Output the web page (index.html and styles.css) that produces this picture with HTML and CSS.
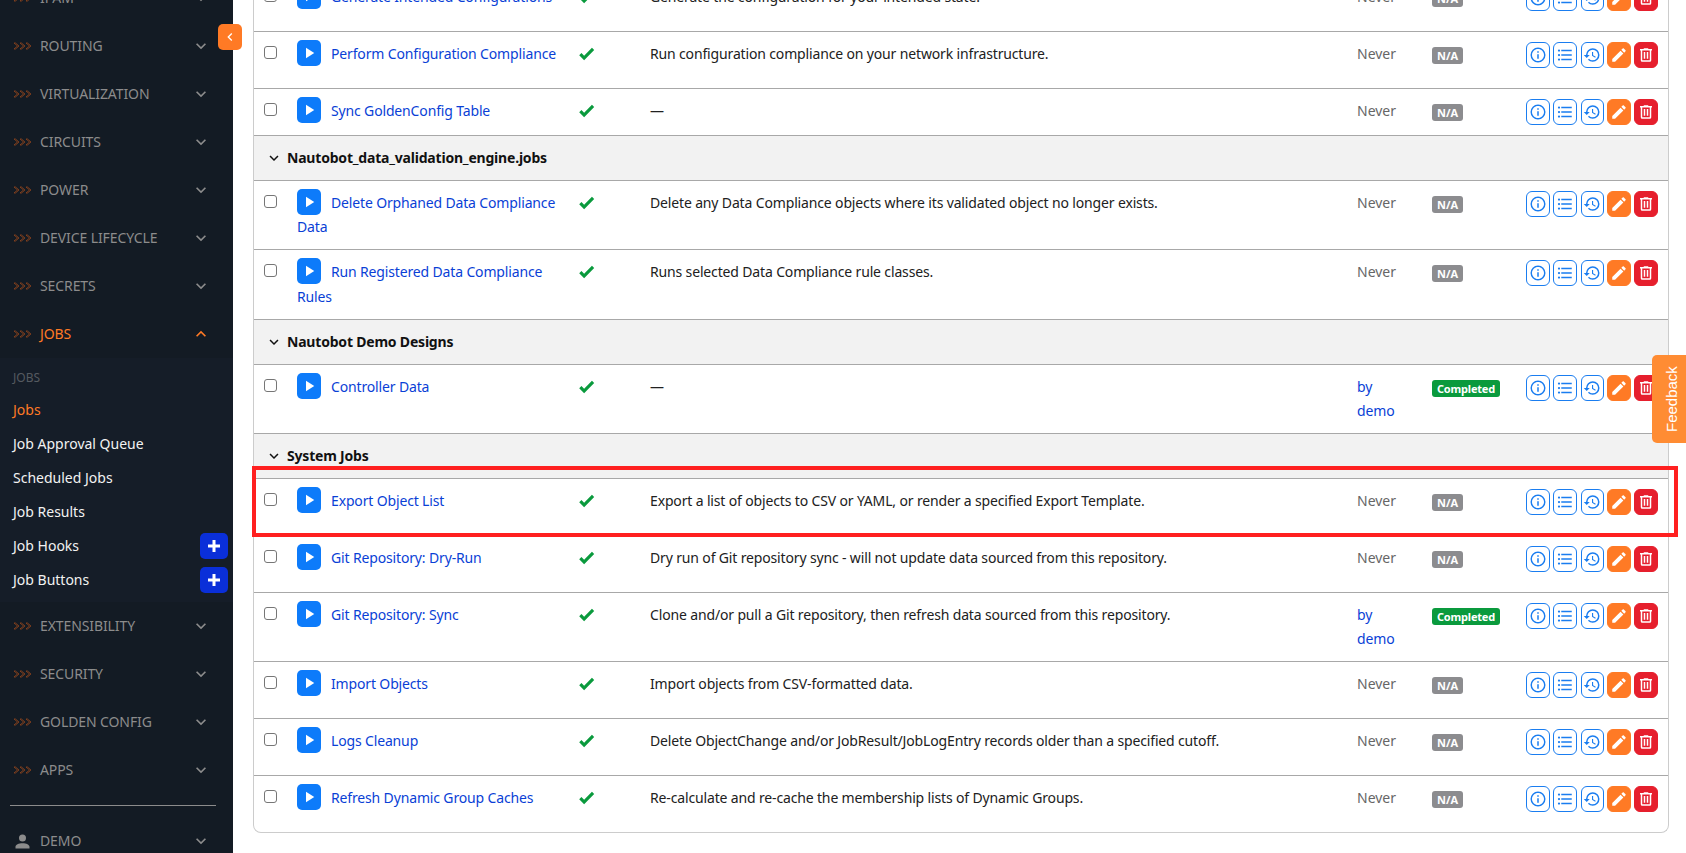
FILE: index.html
```html
<!DOCTYPE html>
<html lang="en">
<head>
    <meta charset="UTF-8">
    <meta name="viewport" content="width=device-width, initial-scale=1.0">
    <title>Jobs - Nautobot</title>
    <link rel="stylesheet" href="styles.css">
</head>
<body>
    <svg class="sprites" xmlns="http://www.w3.org/2000/svg">
        <symbol id="i-info" viewBox="0 0 24 24"><path d="M11,9H13V7H11M12,20C7.59,20 4,16.41 4,12C4,7.59 7.59,4 12,4C16.41,4 20,7.59 20,12C20,16.41 16.41,20 12,20M12,2A10,10 0 0,0 2,12A10,10 0 0,0 12,22A10,10 0 0,0 22,12A10,10 0 0,0 12,2M11,17H13V11H11V17Z"/></symbol>
        <symbol id="i-list" viewBox="0 0 24 24"><path d="M7,5H21V7H7V5M7,13V11H21V13H7M4,4.5A1.5,1.5 0 0,1 5.5,6A1.5,1.5 0 0,1 4,7.5A1.5,1.5 0 0,1 2.5,6A1.5,1.5 0 0,1 4,4.5M4,10.5A1.5,1.5 0 0,1 5.5,12A1.5,1.5 0 0,1 4,13.5A1.5,1.5 0 0,1 2.5,12A1.5,1.5 0 0,1 4,10.5M7,19V17H21V19H7M4,16.5A1.5,1.5 0 0,1 5.5,18A1.5,1.5 0 0,1 4,19.5A1.5,1.5 0 0,1 2.5,18A1.5,1.5 0 0,1 4,16.5Z"/></symbol>
        <symbol id="i-history" viewBox="0 0 24 24"><path d="M13.5,8H12V13L16.28,15.54L17,14.33L13.5,12.25V8M13,3A9,9 0 0,0 4,12H1L4.96,16.03L9,12H6A7,7 0 0,1 13,5A7,7 0 0,1 20,12A7,7 0 0,1 13,19C11.07,19 9.32,18.21 8.06,16.94L6.64,18.36C8.27,20 10.5,21 13,21A9,9 0 0,0 22,12A9,9 0 0,0 13,3Z"/></symbol>
        <symbol id="i-pencil" viewBox="0 0 24 24"><path d="M20.71,7.04C21.1,6.65 21.1,6 20.71,5.63L18.37,3.29C18,2.9 17.35,2.9 16.96,3.29L15.12,5.12L18.87,8.87M3,17.25V21H6.75L17.81,9.93L14.06,6.18L3,17.25Z"/></symbol>
        <symbol id="i-trash" viewBox="0 0 24 24"><path d="M9,3V4H4V6H5V19A2,2 0 0,0 7,21H17A2,2 0 0,0 19,19V6H20V4H15V3H9M7,6H17V19H7V6M9,8V17H11V8H9M13,8V17H15V8H13Z"/></symbol>
        <symbol id="i-play" viewBox="0 0 24 24"><path d="M8,5.14V19.14L19,12.14L8,5.14Z"/></symbol>
        <symbol id="i-check" viewBox="0 0 24 24"><path d="M9,20.42L2.79,14.21L5.62,11.38L9,14.77L18.88,4.88L21.71,7.71L9,20.42Z"/></symbol>
        <symbol id="i-down" viewBox="0 0 24 24"><path d="M7.41,8.58L12,13.17L16.59,8.58L18,10L12,16L6,10L7.41,8.58Z"/></symbol>
        <symbol id="i-up" viewBox="0 0 24 24"><path d="M7.41,15.41L12,10.83L16.59,15.41L18,14L12,8L6,14L7.41,15.41Z"/></symbol>
        <symbol id="i-left" viewBox="0 0 24 24"><path d="M15.41,16.58L10.83,12L15.41,7.41L14,6L8,12L14,18L15.41,16.58Z"/></symbol>
        <symbol id="i-plus" viewBox="0 0 24 24"><path d="M20 14H14V20H10V14H4V10H10V4H14V10H20V14Z"/></symbol>
        <symbol id="i-user" viewBox="0 0 24 24"><path d="M12,4A4,4 0 0,1 16,8A4,4 0 0,1 12,12A4,4 0 0,1 8,8A4,4 0 0,1 12,4M12,14C16.42,14 20,15.79 20,18V20H4V18C4,15.79 7.58,14 12,14Z"/></symbol>
        <symbol id="i-arrows" viewBox="0 0 18 8"><path d="M1 1l3.5 3L1 7M1 1h1.500L6 4 2.500 7H1M7 1l3.500 3L7 7M7 1h1.500L12 4 8.500 7H7M13 1l3.500 3L13 7M13 1h1.500L18 4l-3.500 3H13" fill="none" stroke="currentColor" stroke-width=".7"/></symbol>
    </svg>

    <nav class="sidebar">
        <a class="nav-item"><svg class="nav-arrows"><use href="#i-arrows"/></svg><span class="nav-label">IPAM</span><svg class="nav-caret"><use href="#i-down"/></svg></a>
        <a class="nav-item"><svg class="nav-arrows"><use href="#i-arrows"/></svg><span class="nav-label">ROUTING</span><svg class="nav-caret"><use href="#i-down"/></svg></a>
        <a class="nav-item"><svg class="nav-arrows"><use href="#i-arrows"/></svg><span class="nav-label">VIRTUALIZATION</span><svg class="nav-caret"><use href="#i-down"/></svg></a>
        <a class="nav-item"><svg class="nav-arrows"><use href="#i-arrows"/></svg><span class="nav-label">CIRCUITS</span><svg class="nav-caret"><use href="#i-down"/></svg></a>
        <a class="nav-item"><svg class="nav-arrows"><use href="#i-arrows"/></svg><span class="nav-label">POWER</span><svg class="nav-caret"><use href="#i-down"/></svg></a>
        <a class="nav-item"><svg class="nav-arrows"><use href="#i-arrows"/></svg><span class="nav-label">DEVICE LIFECYCLE</span><svg class="nav-caret"><use href="#i-down"/></svg></a>
        <a class="nav-item"><svg class="nav-arrows"><use href="#i-arrows"/></svg><span class="nav-label">SECRETS</span><svg class="nav-caret"><use href="#i-down"/></svg></a>
        <a class="nav-item active"><svg class="nav-arrows"><use href="#i-arrows"/></svg><span class="nav-label">JOBS</span><svg class="nav-caret"><use href="#i-up"/></svg></a>
        <div class="submenu">
            <div class="submenu-title">JOBS</div>
            <a class="submenu-item current">Jobs</a>
            <a class="submenu-item">Job Approval Queue</a>
            <a class="submenu-item">Scheduled Jobs</a>
            <a class="submenu-item">Job Results</a>
            <a class="submenu-item">Job Hooks<span class="add-btn"><svg><use href="#i-plus"/></svg></span></a>
            <a class="submenu-item">Job Buttons<span class="add-btn"><svg><use href="#i-plus"/></svg></span></a>
        </div>
        <a class="nav-item"><svg class="nav-arrows"><use href="#i-arrows"/></svg><span class="nav-label">EXTENSIBILITY</span><svg class="nav-caret"><use href="#i-down"/></svg></a>
        <a class="nav-item"><svg class="nav-arrows"><use href="#i-arrows"/></svg><span class="nav-label">SECURITY</span><svg class="nav-caret"><use href="#i-down"/></svg></a>
        <a class="nav-item"><svg class="nav-arrows"><use href="#i-arrows"/></svg><span class="nav-label">GOLDEN CONFIG</span><svg class="nav-caret"><use href="#i-down"/></svg></a>
        <a class="nav-item"><svg class="nav-arrows"><use href="#i-arrows"/></svg><span class="nav-label">APPS</span><svg class="nav-caret"><use href="#i-down"/></svg></a>
        <div class="nav-divider"></div>
        <a class="nav-item"><svg class="nav-user"><use href="#i-user"/></svg><span class="nav-label">DEMO</span><svg class="nav-caret"><use href="#i-down"/></svg></a>
    </nav>
    <button class="sidebar-toggle"><svg><use href="#i-left"/></svg></button>

    <main class="content">
        <table class="jobs-table">
            <colgroup>
                <col class="col-select"><col class="col-name"><col class="col-enabled"><col class="col-desc"><col class="col-run"><col class="col-status"><col class="col-actions">
            </colgroup>
            <tbody>
                <tr class="job-row">
                    <td><input type="checkbox" class="row-check"></td>
                    <td><a class="play-btn"><svg><use href="#i-play"/></svg></a><a class="job-link">Generate Intended Configurations</a></td>
                    <td><svg class="ok-icon"><use href="#i-check"/></svg></td>
                    <td><p class="job-desc">Generate the configuration for your intended state.</p></td>
                    <td class="last-run">Never</td>
                    <td><span class="badge badge-na">N/A</span></td>
                    <td><div class="actions"><a class="act"><svg><use href="#i-info"/></svg></a><a class="act"><svg><use href="#i-list"/></svg></a><a class="act act-history"><svg><use href="#i-history"/></svg></a><a class="act act-edit"><svg><use href="#i-pencil"/></svg></a><a class="act act-delete"><svg><use href="#i-trash"/></svg></a></div></td>
                </tr>
                <tr class="job-row">
                    <td><input type="checkbox" class="row-check"></td>
                    <td><a class="play-btn"><svg><use href="#i-play"/></svg></a><a class="job-link">Perform Configuration Compliance</a></td>
                    <td><svg class="ok-icon"><use href="#i-check"/></svg></td>
                    <td><p class="job-desc">Run configuration compliance on your network infrastructure.</p></td>
                    <td class="last-run">Never</td>
                    <td><span class="badge badge-na">N/A</span></td>
                    <td><div class="actions"><a class="act"><svg><use href="#i-info"/></svg></a><a class="act"><svg><use href="#i-list"/></svg></a><a class="act act-history"><svg><use href="#i-history"/></svg></a><a class="act act-edit"><svg><use href="#i-pencil"/></svg></a><a class="act act-delete"><svg><use href="#i-trash"/></svg></a></div></td>
                </tr>
                <tr class="job-row">
                    <td><input type="checkbox" class="row-check"></td>
                    <td><a class="play-btn"><svg><use href="#i-play"/></svg></a><a class="job-link">Sync GoldenConfig Table</a></td>
                    <td><svg class="ok-icon"><use href="#i-check"/></svg></td>
                    <td>—</td>
                    <td class="last-run">Never</td>
                    <td><span class="badge badge-na">N/A</span></td>
                    <td><div class="actions"><a class="act"><svg><use href="#i-info"/></svg></a><a class="act"><svg><use href="#i-list"/></svg></a><a class="act act-history"><svg><use href="#i-history"/></svg></a><a class="act act-edit"><svg><use href="#i-pencil"/></svg></a><a class="act act-delete"><svg><use href="#i-trash"/></svg></a></div></td>
                </tr>
                <tr class="group-row"><td colspan="7"><svg class="group-caret"><use href="#i-down"/></svg><span class="group-name">Nautobot_data_validation_engine.jobs</span></td></tr>
                <tr class="job-row">
                    <td><input type="checkbox" class="row-check"></td>
                    <td><a class="play-btn"><svg><use href="#i-play"/></svg></a><a class="job-link">Delete Orphaned Data Compliance Data</a></td>
                    <td><svg class="ok-icon"><use href="#i-check"/></svg></td>
                    <td><p class="job-desc">Delete any Data Compliance objects where its validated object no longer exists.</p></td>
                    <td class="last-run">Never</td>
                    <td><span class="badge badge-na">N/A</span></td>
                    <td><div class="actions"><a class="act"><svg><use href="#i-info"/></svg></a><a class="act"><svg><use href="#i-list"/></svg></a><a class="act act-history"><svg><use href="#i-history"/></svg></a><a class="act act-edit"><svg><use href="#i-pencil"/></svg></a><a class="act act-delete"><svg><use href="#i-trash"/></svg></a></div></td>
                </tr>
                <tr class="job-row row-tall">
                    <td><input type="checkbox" class="row-check"></td>
                    <td><a class="play-btn"><svg><use href="#i-play"/></svg></a><a class="job-link">Run Registered Data Compliance Rules</a></td>
                    <td><svg class="ok-icon"><use href="#i-check"/></svg></td>
                    <td><p class="job-desc">Runs selected Data Compliance rule classes.</p></td>
                    <td class="last-run">Never</td>
                    <td><span class="badge badge-na">N/A</span></td>
                    <td><div class="actions"><a class="act"><svg><use href="#i-info"/></svg></a><a class="act"><svg><use href="#i-list"/></svg></a><a class="act act-history"><svg><use href="#i-history"/></svg></a><a class="act act-edit"><svg><use href="#i-pencil"/></svg></a><a class="act act-delete"><svg><use href="#i-trash"/></svg></a></div></td>
                </tr>
                <tr class="group-row"><td colspan="7"><svg class="group-caret"><use href="#i-down"/></svg><span class="group-name">Nautobot Demo Designs</span></td></tr>
                <tr class="job-row">
                    <td><input type="checkbox" class="row-check"></td>
                    <td><a class="play-btn"><svg><use href="#i-play"/></svg></a><a class="job-link">Controller Data</a></td>
                    <td><svg class="ok-icon"><use href="#i-check"/></svg></td>
                    <td>—</td>
                    <td class="last-run"><a class="job-link">by<br>demo</a></td>
                    <td><span class="badge badge-done">Completed</span></td>
                    <td><div class="actions"><a class="act"><svg><use href="#i-info"/></svg></a><a class="act"><svg><use href="#i-list"/></svg></a><a class="act act-history"><svg><use href="#i-history"/></svg></a><a class="act act-edit"><svg><use href="#i-pencil"/></svg></a><a class="act act-delete"><svg><use href="#i-trash"/></svg></a></div></td>
                </tr>
                <tr class="group-row"><td colspan="7"><svg class="group-caret"><use href="#i-down"/></svg><span class="group-name">System Jobs</span></td></tr>
                <tr class="job-row">
                    <td><input type="checkbox" class="row-check"></td>
                    <td><a class="play-btn"><svg><use href="#i-play"/></svg></a><a class="job-link">Export Object List</a></td>
                    <td><svg class="ok-icon"><use href="#i-check"/></svg></td>
                    <td><p class="job-desc">Export a list of objects to CSV or YAML, or render a specified Export Template.</p></td>
                    <td class="last-run">Never</td>
                    <td><span class="badge badge-na">N/A</span></td>
                    <td><div class="actions"><a class="act"><svg><use href="#i-info"/></svg></a><a class="act"><svg><use href="#i-list"/></svg></a><a class="act act-history"><svg><use href="#i-history"/></svg></a><a class="act act-edit"><svg><use href="#i-pencil"/></svg></a><a class="act act-delete"><svg><use href="#i-trash"/></svg></a></div></td>
                </tr>
                <tr class="job-row">
                    <td><input type="checkbox" class="row-check"></td>
                    <td><a class="play-btn"><svg><use href="#i-play"/></svg></a><a class="job-link">Git Repository: Dry-Run</a></td>
                    <td><svg class="ok-icon"><use href="#i-check"/></svg></td>
                    <td><p class="job-desc">Dry run of Git repository sync - will not update data sourced from this repository.</p></td>
                    <td class="last-run">Never</td>
                    <td><span class="badge badge-na">N/A</span></td>
                    <td><div class="actions"><a class="act"><svg><use href="#i-info"/></svg></a><a class="act"><svg><use href="#i-list"/></svg></a><a class="act act-history"><svg><use href="#i-history"/></svg></a><a class="act act-edit"><svg><use href="#i-pencil"/></svg></a><a class="act act-delete"><svg><use href="#i-trash"/></svg></a></div></td>
                </tr>
                <tr class="job-row">
                    <td><input type="checkbox" class="row-check"></td>
                    <td><a class="play-btn"><svg><use href="#i-play"/></svg></a><a class="job-link">Git Repository: Sync</a></td>
                    <td><svg class="ok-icon"><use href="#i-check"/></svg></td>
                    <td><p class="job-desc">Clone and/or pull a Git repository, then refresh data sourced from this repository.</p></td>
                    <td class="last-run"><a class="job-link">by<br>demo</a></td>
                    <td><span class="badge badge-done">Completed</span></td>
                    <td><div class="actions"><a class="act"><svg><use href="#i-info"/></svg></a><a class="act"><svg><use href="#i-list"/></svg></a><a class="act act-history"><svg><use href="#i-history"/></svg></a><a class="act act-edit"><svg><use href="#i-pencil"/></svg></a><a class="act act-delete"><svg><use href="#i-trash"/></svg></a></div></td>
                </tr>
                <tr class="job-row">
                    <td><input type="checkbox" class="row-check"></td>
                    <td><a class="play-btn"><svg><use href="#i-play"/></svg></a><a class="job-link">Import Objects</a></td>
                    <td><svg class="ok-icon"><use href="#i-check"/></svg></td>
                    <td><p class="job-desc">Import objects from CSV-formatted data.</p></td>
                    <td class="last-run">Never</td>
                    <td><span class="badge badge-na">N/A</span></td>
                    <td><div class="actions"><a class="act"><svg><use href="#i-info"/></svg></a><a class="act"><svg><use href="#i-list"/></svg></a><a class="act act-history"><svg><use href="#i-history"/></svg></a><a class="act act-edit"><svg><use href="#i-pencil"/></svg></a><a class="act act-delete"><svg><use href="#i-trash"/></svg></a></div></td>
                </tr>
                <tr class="job-row">
                    <td><input type="checkbox" class="row-check"></td>
                    <td><a class="play-btn"><svg><use href="#i-play"/></svg></a><a class="job-link">Logs Cleanup</a></td>
                    <td><svg class="ok-icon"><use href="#i-check"/></svg></td>
                    <td><p class="job-desc">Delete ObjectChange and/or JobResult/JobLogEntry records older than a specified cutoff.</p></td>
                    <td class="last-run">Never</td>
                    <td><span class="badge badge-na">N/A</span></td>
                    <td><div class="actions"><a class="act"><svg><use href="#i-info"/></svg></a><a class="act"><svg><use href="#i-list"/></svg></a><a class="act act-history"><svg><use href="#i-history"/></svg></a><a class="act act-edit"><svg><use href="#i-pencil"/></svg></a><a class="act act-delete"><svg><use href="#i-trash"/></svg></a></div></td>
                </tr>
                <tr class="job-row">
                    <td><input type="checkbox" class="row-check"></td>
                    <td><a class="play-btn"><svg><use href="#i-play"/></svg></a><a class="job-link">Refresh Dynamic Group Caches</a></td>
                    <td><svg class="ok-icon"><use href="#i-check"/></svg></td>
                    <td><p class="job-desc">Re-calculate and re-cache the membership lists of Dynamic Groups.</p></td>
                    <td class="last-run">Never</td>
                    <td><span class="badge badge-na">N/A</span></td>
                    <td><div class="actions"><a class="act"><svg><use href="#i-info"/></svg></a><a class="act"><svg><use href="#i-list"/></svg></a><a class="act act-history"><svg><use href="#i-history"/></svg></a><a class="act act-edit"><svg><use href="#i-pencil"/></svg></a><a class="act act-delete"><svg><use href="#i-trash"/></svg></a></div></td>
                </tr>
            </tbody>
        </table>
    </main>

    <div class="highlight-frame"></div>
    <a class="feedback-tab">Feedback</a>
</body>
</html>
```

FILE: styles.css
```css
html, body {
    height: 100%;
}
body {
    display: flex;
    margin: 0;
    overflow: hidden;
    font-family: "Noto Sans", "Open Sans", Arial, sans-serif;
    font-size: 14px;
    line-height: 24px;
    color: #212121;
    background-color: #ffffff;
}
.sprites {
    display: none;
}

/* sidebar */
.sidebar {
    flex: 0 0 233px;
    height: 879px;
    margin-top: -26px;
    background-color: #131b24;
}
.nav-item {
    display: flex;
    align-items: center;
    height: 48px;
    padding-left: 13px;
    color: #8c8c8c;
}
.nav-arrows {
    flex: 0 0 18px;
    width: 18px;
    height: 8px;
    color: #a04a1c;
}
.nav-user {
    flex: 0 0 21px;
    width: 21px;
    height: 21px;
    margin: 0 -2px 0 -1px;
    fill: #8c8c8c;
}
.nav-label {
    flex: 1;
    margin-left: 9px;
    letter-spacing: -0.1px;
}
.nav-caret {
    width: 20px;
    height: 20px;
    margin-right: 22px;
    fill: #8c8c8c;
}
.nav-item.active,
.nav-item.active .nav-caret {
    color: #ff7a25;
    fill: #ff7a25;
}
.submenu {
    padding-bottom: 5px;
    background-color: #151d28;
}
.submenu-title {
    height: 35px;
    padding: 8px 13px 0;
    box-sizing: border-box;
    font-size: 12px;
    line-height: 24px;
    color: #555a60;
}
.submenu-item {
    display: flex;
    align-items: center;
    justify-content: space-between;
    height: 34px;
    padding: 0 5px 0 13px;
    color: #f2f2f2;
}
.submenu-item.current {
    color: #ff7a25;
}
.add-btn {
    display: flex;
    align-items: center;
    justify-content: center;
    width: 28px;
    height: 26px;
    border-radius: 5px;
    background-color: #0a2fd9;
}
.add-btn svg {
    width: 18px;
    height: 18px;
    fill: #ffffff;
}
.nav-divider {
    height: 1px;
    margin: 11px 17px 11px 10px;
    background-color: #8c8c8c;
}
.sidebar-toggle {
    position: absolute;
    top: 24px;
    left: 218px;
    display: flex;
    align-items: center;
    justify-content: center;
    width: 24px;
    height: 26px;
    padding: 0;
    border: none;
    border-radius: 5px;
    background-color: #ff7a25;
}
.sidebar-toggle svg {
    width: 16px;
    height: 16px;
    fill: #ffffff;
}

/* table */
.content {
    flex: 1;
    margin-top: -26px;
    padding-left: 20px;
}
.jobs-table {
    width: 1416px;
    table-layout: fixed;
    border-collapse: separate;
    border-spacing: 0;
    border: 1px solid #cccccc;
    border-top: none;
    border-radius: 0 0 8px 8px;
}
.col-select { width: 33px; }
.col-name { width: 282px; }
.col-enabled { width: 71px; }
.col-desc { width: 707px; }
.col-run { width: 75px; }
.col-status { width: 94px; }
.col-actions { width: 152px; }
.jobs-table td {
    padding: 10px;
    border-top: 1px solid #a8a8a8;
    vertical-align: top;
}
.jobs-table .row-tall td {
    line-height: 24.5px;
}
.job-desc {
    min-height: 26px;
    margin: 0 0 10px;
    letter-spacing: -0.15px;
}
.row-check {
    display: block;
    width: 13px;
    height: 13px;
    margin: 4px 0 0;
    appearance: none;
    border: 1px solid #767676;
    border-radius: 3px;
    background-color: #ffffff;
}
.play-btn {
    display: inline-flex;
    align-items: center;
    justify-content: center;
    width: 24px;
    height: 26px;
    margin: -2px 10px 0 0;
    border-radius: 5px;
    vertical-align: top;
    background-color: #0d7bfa;
}
.play-btn svg {
    width: 18px;
    height: 18px;
    fill: #ffffff;
}
.job-link {
    letter-spacing: -0.15px;
    color: #0a3fd6;
}
.ok-icon {
    display: block;
    width: 19px;
    height: 19px;
    margin: 2px 0 0 -2px;
    fill: #0a9a3d;
}
.last-run {
    color: #666666;
}
.badge {
    display: block;
    width: fit-content;
    height: 17px;
    margin-top: 5px;
    padding: 0 5px;
    border-radius: 3px;
    font-size: 11px;
    font-weight: 700;
    line-height: 17px;
    color: #ffffff;
}
.badge-na {
    background-color: #8c8c8f;
}
.badge-done {
    letter-spacing: -0.2px;
    background-color: #0a9a3d;
}
.actions {
    display: flex;
    gap: 3px;
}
.act {
    display: flex;
    align-items: center;
    justify-content: center;
    width: 24px;
    height: 26px;
    box-sizing: border-box;
    border: 1px solid #1a7df0;
    border-radius: 6px;
    fill: #1a7df0;
}
.act svg {
    flex: none;
    width: 18px;
    height: 18px;
}
.act-history {
    margin-left: 1px;
}
.act-edit {
    border-color: #ff7a25;
    background-color: #ff7a25;
    fill: #ffffff;
}
.act-delete {
    border-color: #e61f2d;
    background-color: #e61f2d;
    fill: #ffffff;
}
.group-row td {
    background-color: #f2f2f2;
    font-weight: 700;
    color: #111111;
}
.group-name {
    letter-spacing: -0.2px;
}
.group-caret {
    width: 18px;
    height: 18px;
    margin: 0 4px 0 1px;
    vertical-align: -4px;
    fill: #111111;
}

/* overlays */
.highlight-frame {
    position: absolute;
    top: 466px;
    left: 252px;
    width: 1418px;
    height: 63px;
    border: 4px solid #ff2020;
}
.feedback-tab {
    position: absolute;
    top: 355px;
    left: 1652px;
    display: flex;
    align-items: center;
    justify-content: center;
    width: 34px;
    height: 88px;
    box-sizing: border-box;
    padding-right: 5px;
    border-radius: 0 5px 5px 0;
    background-color: #ff8c33;
    font-family: "Liberation Sans", Arial, sans-serif;
    font-size: 15px;
    color: #ffffff;
    writing-mode: vertical-rl;
    transform: rotate(180deg);
}
```
